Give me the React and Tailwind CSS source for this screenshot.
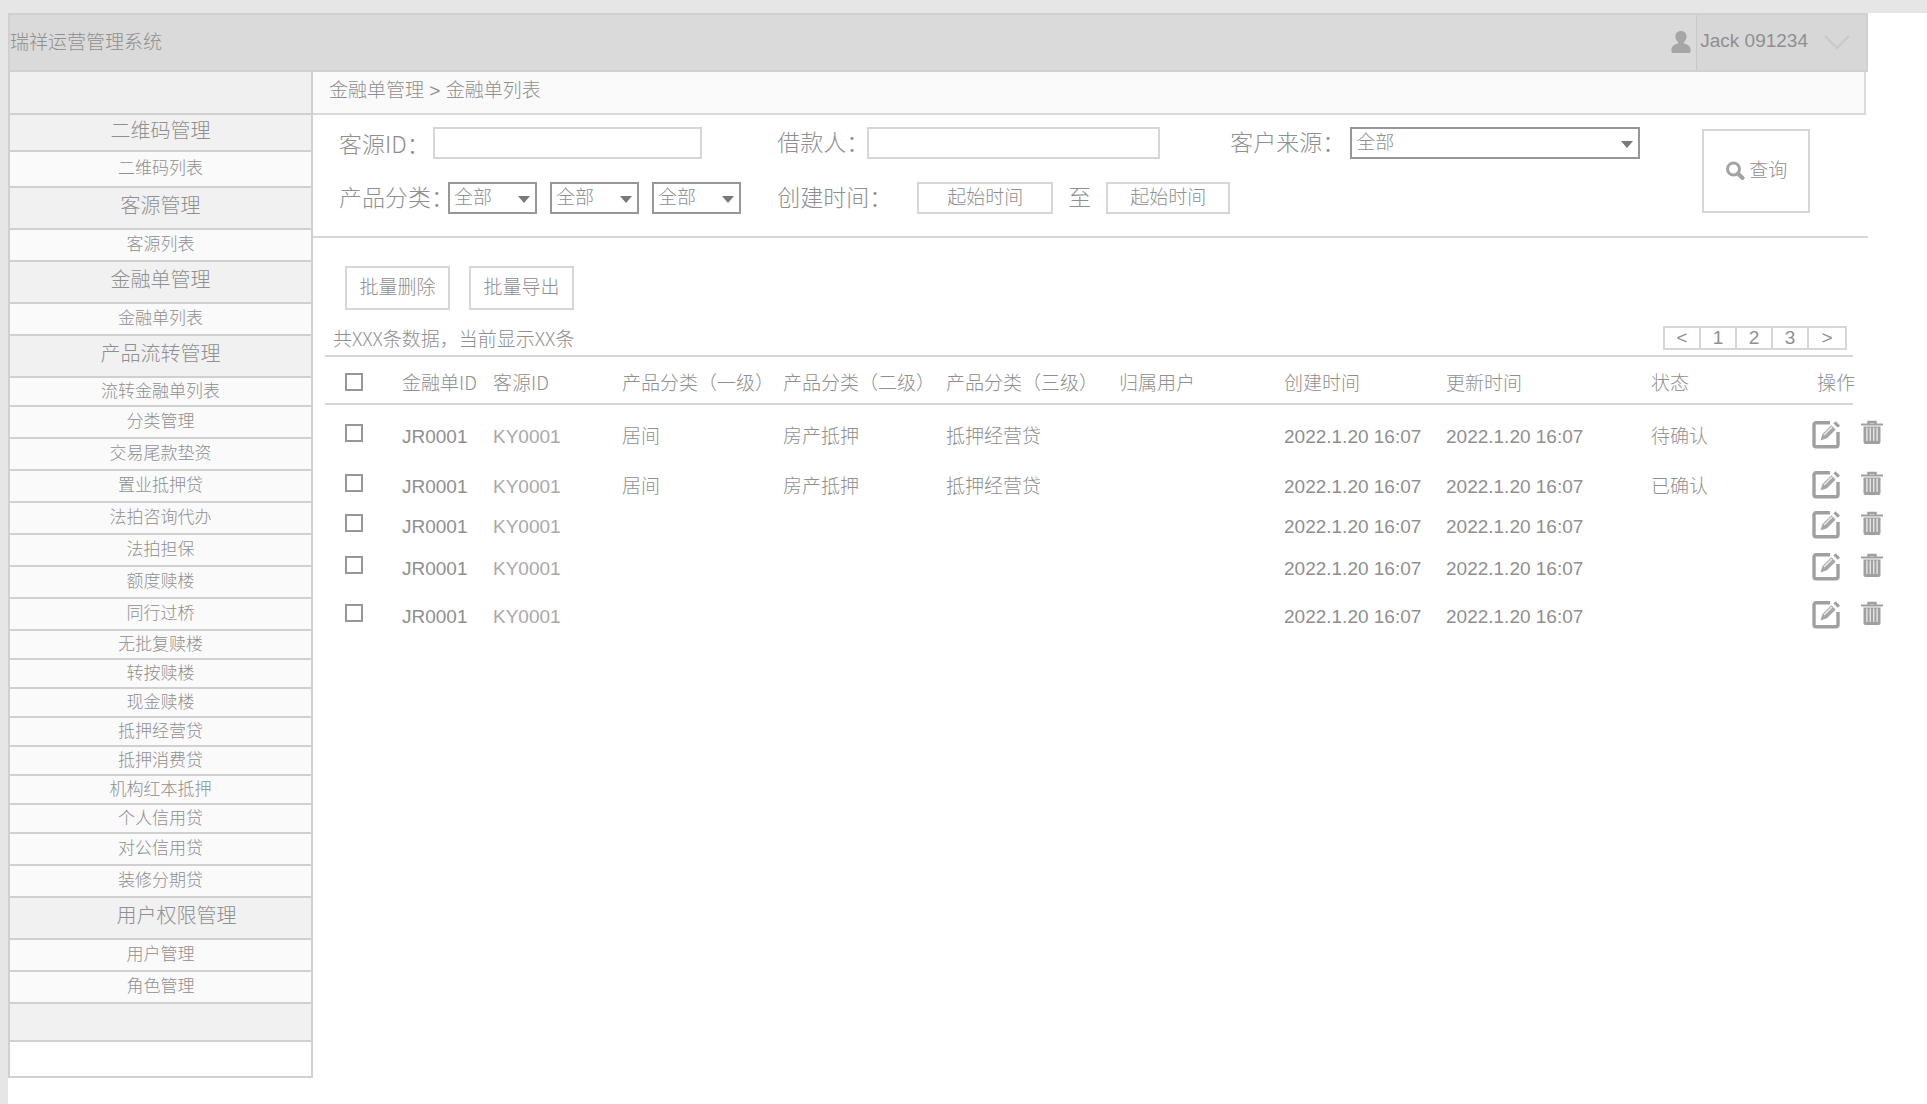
import { useState } from 'react'

const menu = [
    { name: '二维码管理', group: true, size: 'h-[37px]' },
    { name: '二维码列表', size: 'h-9' },
    { name: '客源管理', group: true, size: 'h-[42px]' },
    { name: '客源列表', size: 'h-8' },
    { name: '金融单管理', group: true, size: 'h-[42px]' },
    { name: '金融单列表', size: 'h-8' },
    { name: '产品流转管理', group: true, size: 'h-[42px]' },
    { name: '流转金融单列表', size: 'h-[29px]' },
    { name: '分类管理', size: 'h-8' },
    { name: '交易尾款垫资', size: 'h-8' },
    { name: '置业抵押贷', size: 'h-8' },
    { name: '法拍咨询代办', size: 'h-8' },
    { name: '法拍担保', size: 'h-8' },
    { name: '额度赎楼', size: 'h-8' },
    { name: '同行过桥', size: 'h-8' },
    { name: '无批复赎楼', size: 'h-[29px]' },
    { name: '转按赎楼', size: 'h-[29px]' },
    { name: '现金赎楼', size: 'h-[29px]' },
    { name: '抵押经营贷', size: 'h-[29px]' },
    { name: '抵押消费贷', size: 'h-[29px]' },
    { name: '机构红本抵押', size: 'h-[29px]' },
    { name: '个人信用贷', size: 'h-[29px]' },
    { name: '对公信用贷', size: 'h-8' },
    { name: '装修分期贷', size: 'h-8' },
    { name: '用户权限管理', group: true, size: 'h-[42px] pl-8' },
    { name: '用户管理', size: 'h-8' },
    { name: '角色管理', size: 'h-8' },
]

const rows = [
    { id: 1, level1: '居间', level2: '房产抵押', level3: '抵押经营贷', status: '待确认', size: 'h-16' },
    { id: 2, level1: '居间', level2: '房产抵押', level3: '抵押经营贷', status: '已确认', size: 'h-[38px]' },
    { id: 3, size: 'h-[42px]' },
    { id: 4, size: 'h-[42px]' },
    { id: 5, size: 'h-[54px]' },
]

const UserIcon = () => (
    <svg viewBox="0 0 20 22" className="w-5 h-[22px] fill-[#a6a6a6]" aria-hidden="true">
        <path d="M10 0c3.4 0 5.6 2.400 5.600 5.600 0 2.300-1.200 4.400-2.800 5.600v1.300c3.600.9 6.700 2.500 6.700 5.500v2.500c0 .9-.6 1.500-1.500 1.500H2c-.9 0-1.500-.6-1.500-1.500V18c0-3 3.100-4.600 6.700-5.500v-1.300C5.600 10 4.400 7.900 4.400 5.600 4.400 2.400 6.600 0 10 0z" />
    </svg>
)

const SearchIcon = () => (
    <svg viewBox="0 0 20 20" className="w-5 h-5" fill="none" stroke="#a3a3a3" aria-hidden="true">
        <circle cx="8.500" cy="8" r="6" strokeWidth="3" />
        <path d="M13 12.500l4.500 4.500" strokeWidth="4" strokeLinecap="round" />
    </svg>
)

const EditIcon = () => (
    <svg viewBox="0 0 30 30" className="w-[30px] h-[30px]" fill="none" aria-hidden="true">
        <path d="M19 2.800H5a2 2 0 0 0-2 2v20a2 2 0 0 0 2 2h20a2 2 0 0 0 2-2V12" stroke="#a0a0a0" strokeWidth="3.400" />
        <path d="M9.500 20.500l2-6.500L21 4.800l4.200 4.200-9.200 9.300z" fill="#a6a6a6" />
        <path d="M13 15l8-8" stroke="#ececec" strokeWidth="1.600" />
        <path d="M20 4l6 6" stroke="#fff" strokeWidth="1.200" />
        <path d="M22.500 3.500l2-2.200 4.500 4.200-2.200 2.300z" fill="#a0a0a0" />
    </svg>
)

const TrashIcon = () => (
    <svg viewBox="0 0 22 24" className="w-[22px] h-6" aria-hidden="true">
        <path d="M7.500 4V2h7v2" fill="none" stroke="#a0a0a0" strokeWidth="2.400" />
        <path d="M0 3.500h22v2H0z" fill="#a0a0a0" />
        <path d="M2.500 6.500h17V22a2 2 0 0 1-2 2h-13a2 2 0 0 1-2-2z" fill="#a0a0a0" />
        <path d="M5.900 7.500v13.500M9.300 7.500v13.500M12.700 7.500v13.500M16.100 7.500v13.500" stroke="#e6e6e6" strokeWidth="1.400" />
    </svg>
)

const Select = ({ label, id, className }) => (
    <div className={`relative ${className}`}>
        <select
            id={id}
            aria-label={label}
            className="w-full h-full appearance-none border-2 border-[#979797] bg-white pl-1 text-[19px] leading-6"
        >
            <option>全部</option>
        </select>
        <svg viewBox="0 0 12 7" className="absolute right-[7px] top-[14px] w-3 h-[7px] fill-[#797979] pointer-events-none" aria-hidden="true">
            <path d="M0 0h12L6 7z" />
        </svg>
    </div>
)

const Header = () => (
    <header className="flex justify-between h-[59px] mr-[59px] bg-[#dadada] border-2 border-[#d0d0d0]">
        <h1 className="self-center text-[19px] leading-7">瑞祥运营管理系统</h1>
        <div className="flex">
            <div className="pt-4 pr-[5px]">
                <UserIcon />
            </div>
            <button type="button" className="flex items-center gap-4 pl-[3px] pr-4 pb-1 bg-[#d7d7d7] border-l border-[#c8c8c8]">
                <span>Jack 091234</span>
                <svg viewBox="0 0 26 20" className="w-[26px] h-5" fill="none" stroke="#c9c9c9" strokeWidth="2" aria-hidden="true">
                    <path d="M1 5l12 12L25 5" />
                </svg>
            </button>
        </div>
    </header>
)

const Sidebar = () => (
    <nav className="w-[305px] shrink-0 border-x-2 border-[#d0d0d0] text-center">
        <div className="h-[43px] bg-[#f0f0f0] border-b-2 border-[#d0d0d0]"></div>
        <ul>
            {menu.map((item) => (
                <li
                    key={item.name}
                    className={`flex items-center justify-center border-b-2 border-[#d0d0d0] ${item.size} ${item.group ? 'pb-1 bg-[#f1f1f1] text-[20px] leading-7' : 'bg-[#fafafa] text-[17px] leading-6'}`}
                >
                    <a href="#">{item.name}</a>
                </li>
            ))}
        </ul>
        <div className="h-[38px] bg-[#f1f1f1] border-b-2 border-[#d0d0d0]"></div>
        <div className="h-9 border-b-2 border-[#d0d0d0]"></div>
    </nav>
)

const Filters = () => (
    <form
        className="grid grid-cols-[439fr_450fr_473fr_166fr] grid-rows-[32px_32px] gap-y-[23px] mr-[59px] pt-3 pb-[22px] pl-[26px] border-b-2 border-[#d6d6d6]"
        onSubmit={(e) => e.preventDefault()}
    >
        <div className="flex items-center">
            <label htmlFor="source-id" className="w-[94px] text-[23px] font-['Noto_Sans_CJK_SC',sans-serif]">客源ID：</label>
            <input id="source-id" type="text" className="flex-1 min-w-0 h-8 mr-[75px] border-2 border-[#d6d6d6]" />
        </div>
        <div className="flex items-center">
            <label htmlFor="borrower" className="w-[90px] text-[23px] whitespace-nowrap">借款人：</label>
            <input id="borrower" type="text" className="flex-1 min-w-0 h-8 mr-[70px] border-2 border-[#d6d6d6]" />
        </div>
        <div className="flex items-center">
            <label htmlFor="origin" className="w-[120px] text-[23px] whitespace-nowrap">客户来源：</label>
            <Select id="origin" className="flex-1 h-8 mr-[62px]" />
        </div>
        <button
            type="submit"
            className="row-span-2 self-center flex items-center justify-center gap-1 w-[108px] h-[84px] border-2 border-[#d6d6d6]"
        >
            <SearchIcon />
            查询
        </button>
        <div className="flex items-center">
            <label htmlFor="level-1" className="w-[109px] text-[23px] whitespace-nowrap">产品分类：</label>
            <div className="flex gap-[13px]">
                <Select id="level-1" className="w-[89px] h-8" />
                <Select label="二级分类" className="w-[89px] h-8" />
                <Select label="三级分类" className="w-[89px] h-8" />
            </div>
        </div>
        <div className="flex items-center">
            <label htmlFor="start" className="w-[140px] text-[23px] whitespace-nowrap">创建时间：</label>
            <input id="start" type="text" placeholder="起始时间" className="w-[136px] h-8 border-2 border-[#d6d6d6] text-center placeholder:text-[#8f8f8f]" />
            <label htmlFor="end" className="px-[15px] text-[23px]">至</label>
            <input id="end" type="text" placeholder="起始时间" className="w-[124px] h-8 border-2 border-[#d6d6d6] text-center placeholder:text-[#8f8f8f]" />
        </div>
    </form>
)

const Pagination = () => (
    <div className="flex h-6 border-2 border-[#d6d6d6] divide-x-2 divide-[#d6d6d6]">
        {['<', '1', '2', '3', '>'].map((page) => (
            <button type="button" key={page} className="flex items-center justify-center w-9">
                {page}
            </button>
        ))}
    </div>
)

const Check = ({ label, ...props }) => (
    <input
        type="checkbox"
        aria-label={label}
        className="block appearance-none w-[18px] h-[18px] border-2 border-[#979797] checked:bg-[#979797]"
        {...props}
    />
)

const List = () => {
    const [checked, setChecked] = useState([])

    const toggle = (id) => {
        setChecked((prev) => prev.includes(id) ? prev.filter((x) => x !== id) : [...prev, id])
    }

    const th = "pt-1 border-y-2 border-[#d6d6d6] font-light font-['Noto_Sans_CJK_SC',sans-serif]"

    return (
        <table className="table-fixed w-full text-left whitespace-nowrap">
            <colgroup>
                <col className="w-[77px]" />
                <col className="w-[91px]" />
                <col className="w-[129px]" />
                <col className="w-[161px]" />
                <col className="w-[163px]" />
                <col className="w-[173px]" />
                <col />
                <col className="w-[162px]" />
                <col className="w-[205px]" />
                <col className="w-[160px]" />
                <col className="w-[42px]" />
                <col className="w-[37px]" />
            </colgroup>
            <thead>
                <tr className="h-12">
                    <th className={`${th} pl-5`}>
                        <Check
                            label="全选"
                            checked={checked.length === rows.length}
                            onChange={(e) => setChecked(e.target.checked ? rows.map((r) => r.id) : [])}
                        />
                    </th>
                    <th className={th}>金融单ID</th>
                    <th className={th}>客源ID</th>
                    <th className={th}>产品分类（一级）</th>
                    <th className={th}>产品分类（二级）</th>
                    <th className={th}>产品分类（三级）</th>
                    <th className={th}>归属用户</th>
                    <th className={th}>创建时间</th>
                    <th className={th}>更新时间</th>
                    <th className={th}>状态</th>
                    <th className={`${th} pl-[6px]`}>操作</th>
                    <td></td>
                </tr>
            </thead>
            <tbody>
                {rows.map((row) => (
                    <tr key={row.id} className={row.size}>
                        <td className="pl-5 pb-2">
                            <Check label="选择" checked={checked.includes(row.id)} onChange={() => toggle(row.id)} />
                        </td>
                        <td>JR0001</td>
                        <td className="text-[#a9a9a9]">KY0001</td>
                        <td>{row.level1}</td>
                        <td>{row.level2}</td>
                        <td>{row.level3}</td>
                        <td></td>
                        <td>2022.1.20 16:07</td>
                        <td>2022.1.20 16:07</td>
                        <td>{row.status}</td>
                        <td className="pb-1">
                            <button type="button" aria-label="编辑" className="block">
                                <EditIcon />
                            </button>
                        </td>
                        <td className="pb-2 pl-2">
                            <button type="button" aria-label="删除" className="block">
                                <TrashIcon />
                            </button>
                        </td>
                    </tr>
                ))}
            </tbody>
        </table>
    )
}

const App = () => {
    return (
        <div className="min-h-screen pt-[13px] pl-2 bg-[#e6e6e6]">
            <div className="min-h-[calc(100vh-13px)] bg-white font-['Liberation_Sans','Noto_Sans_CJK_SC',sans-serif] font-light text-[19px] leading-6 text-[#8f8f8f]">
                <Header />
                <div className="flex">
                    <Sidebar />
                    <main className="flex-1 min-w-0">
                        <div className="h-[43px] mr-[61px] pt-[5px] pl-4 bg-[#fafafa] border-b-2 border-r-2 border-[#d9d9d9] leading-7">
                            金融单管理 &gt; 金融单列表
                        </div>
                        <Filters />
                        <div className="flex gap-[19px] pt-7 pl-8">
                            <button type="button" className="w-[105px] h-11 border-2 border-[#d6d6d6]">批量删除</button>
                            <button type="button" className="w-[105px] h-11 border-2 border-[#d6d6d6]">批量导出</button>
                        </div>
                        <div className="pl-3 pr-[37px]">
                            <div className="flex items-center justify-between pt-4 pb-[5px] pl-2 pr-[43px]">
                                <p className="font-['Noto_Sans_CJK_SC',sans-serif]">共XXX条数据，当前显示XX条</p>
                                <Pagination />
                            </div>
                            <List />
                        </div>
                    </main>
                </div>
            </div>
        </div>
    )
}

export default App
